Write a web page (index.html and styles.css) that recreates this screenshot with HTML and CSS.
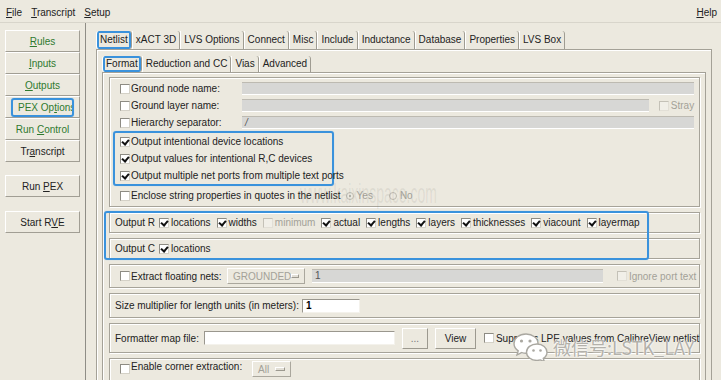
FILE: index.html
```html
<!DOCTYPE html>
<html lang="en">
<head>
    <meta charset="UTF-8">
    <title>Calibre Interactive - PEX</title>
    <link rel="stylesheet" href="styles.css">
</head>
<body>
    <div class="menubar">
        <span><u>F</u>ile</span>
        <span><u>T</u>ranscript</span>
        <span><u>S</u>etup</span>
        <span class="help"><u>H</u>elp</span>
    </div>

    <div class="main">
        <div class="sidebar">
            <div class="btn green"><span><u>R</u>ules</span></div>
            <div class="btn green"><span><u>I</u>nputs</span></div>
            <div class="btn green"><span><u>O</u>utputs</span></div>
            <div class="btn green"><span class="mark">PEX Op<u>t</u>ions</span></div>
            <div class="btn green"><span>Run <u>C</u>ontrol</span></div>
            <div class="btn"><span>Tr<u>a</u>nscript</span></div>
            <div class="btn gap"><span>Run <u>P</u>EX</span></div>
            <div class="btn gap2"><span>Start R<u>V</u>E</span></div>
        </div>

        <div class="content">
            <div class="tabs">
                <div class="tab sel">Netlist</div>
                <div class="tab">xACT 3D</div>
                <div class="tab">LVS Options</div>
                <div class="tab">Connect</div>
                <div class="tab">Misc</div>
                <div class="tab">Include</div>
                <div class="tab">Inductance</div>
                <div class="tab">Database</div>
                <div class="tab">Properties</div>
                <div class="tab">LVS Box</div>
            </div>
            <div class="pane">
                <div class="tabs sub">
                    <div class="tab sel">Format</div>
                    <div class="tab">Reduction and CC</div>
                    <div class="tab">Vias</div>
                    <div class="tab">Advanced</div>
                </div>
                <div class="pane inner">

                    <div class="group format">
                        <div class="row">
                            <span class="cb"></span><span class="lbl name">Ground node name:</span>
                            <span class="field"></span>
                        </div>
                        <div class="row">
                            <span class="cb"></span><span class="lbl name">Ground layer name:</span>
                            <span class="field"></span>
                            <span class="cb off stray"></span><span class="dim">Stray</span>
                        </div>
                        <div class="row">
                            <span class="cb"></span><span class="lbl name">Hierarchy separator:</span>
                            <span class="field slash">/</span>
                        </div>
                        <div class="picked">
                            <div class="row"><span class="cb on"></span>Output intentional device locations</div>
                            <div class="row"><span class="cb on"></span>Output values for intentional R,C devices</div>
                            <div class="row"><span class="cb on"></span>Output multiple net ports from multiple text ports</div>
                        </div>
                        <div class="row last">
                            <span class="cb"></span>Enclose string properties in quotes in the netlist
                            <span class="rb on"></span><span class="dim">Yes</span>
                            <span class="rb no"></span><span class="dim">No</span>
                        </div>
                    </div>

                    <div class="group line">
                        <span class="head">Output R</span>
                        <span class="item"><span class="cb on"></span>locations</span>
                        <span class="item"><span class="cb on"></span>widths</span>
                        <span class="item dim"><span class="cb off"></span>minimum</span>
                        <span class="item"><span class="cb on"></span>actual</span>
                        <span class="item"><span class="cb on"></span>lengths</span>
                        <span class="item"><span class="cb on"></span>layers</span>
                        <span class="item"><span class="cb on"></span>thicknesses</span>
                        <span class="item"><span class="cb on"></span>viacount</span>
                        <span class="item"><span class="cb on"></span>layermap</span>
                    </div>

                    <div class="group line">
                        <span class="head">Output C</span>
                        <span class="item"><span class="cb on"></span>locations</span>
                    </div>

                    <div class="group float">
                        <span class="cb"></span><span class="lbl nets">Extract floating nets:</span>
                        <span class="opt wide">GROUNDED<i></i></span>
                        <span class="field grow">1</span>
                        <span class="cb off ignore"></span><span class="dim">Ignore port text</span>
                    </div>

                    <div class="group size">
                        <span class="lbl mult">Size multiplier for length units (in meters):</span>
                        <span class="field white short">1</span>
                    </div>

                    <div class="group map">
                        <span class="lbl">Formatter map file:</span>
                        <span class="field white path"></span>
                        <span class="pbtn dots">...</span>
                        <span class="pbtn view">View</span>
                        <span class="cb supp"></span>Suppress LPE values from CalibreView netlist
                    </div>

                    <div class="group corner">
                        <span class="cb"></span><span class="lbl crn">Enable corner extraction:</span>
                        <span class="opt small">All<i></i></span>
                    </div>

                </div>
            </div>
        </div>
    </div>

    <!-- annotation box drawn over the Output R / Output C rows -->
    <div class="hl"></div>

    <div class="wm">www.kaixinspace.com</div>
    <div class="wechat">
        <svg width="38" height="29" viewBox="0 0 38 29">
            <path d="M14 2C7 2 2 6.3 2 11.5c0 3 1.6 5.6 4.2 7.3L5 23l4.6-2.4c1.4.4 2.8.6 4.4.6 6.6 0 12-4.3 12-9.7S20.6 2 14 2z" fill="#fff" stroke="#aaa8a1" stroke-width="1.4"/>
            <circle cx="9.5" cy="9" r="1.6" fill="#aaa8a1"/>
            <circle cx="18" cy="9" r="1.6" fill="#aaa8a1"/>
            <path d="M25 12c-6 0-10.5 3.7-10.5 8.2S19 28.4 25 28.4c1.2 0 2.4-.2 3.5-.5l3.8 1.8-1-3.3c2.3-1.5 3.7-3.7 3.7-6.2C35 15.7 30.8 12 25 12z" fill="#fff" stroke="#aaa8a1" stroke-width="1.4"/>
            <circle cx="21.5" cy="18.5" r="1.3" fill="#aaa8a1"/>
            <circle cx="28.5" cy="18.5" r="1.3" fill="#aaa8a1"/>
        </svg>
        <span>微信号:LSTK_LAY</span>
    </div>
</body>
</html>
```

FILE: styles.css
```css
*{
    box-sizing: border-box;
}

body{
    margin: 0;
    width: 721px;
    height: 380px;
    overflow: hidden;
    position: relative;
    background-color: #ECE9DF;
    font-family: "Liberation Sans", Arial, sans-serif;
    font-size: 10px;
    color: #222;
    white-space: nowrap;
}

u{
    text-decoration-thickness: 1px;
    text-underline-offset: 1px;
}

/* menu bar */
.menubar{
    height: 23px;
    display: flex;
    align-items: center;
    gap: 9px;
    padding: 2px 4px 0 6px;
    border-bottom: 1px solid #d8d5cb;
}

.menubar .help{
    margin-left: auto;
}

.main{
    display: flex;
    height: 357px;
}

/* left button column */
.sidebar{
    width: 86px;
    flex: none;
    padding: 7px 0 0 5px;
    border-right: 1px solid #8f8d86;
}

.btn{
    width: 75px;
    height: 22px;
    display: flex;
    align-items: center;
    justify-content: center;
    border: 1px solid;
    border-color: #fff #a19e94 #a19e94 #fff;
}

.btn.green{
    color: #2f7a2f;
}

.btn.gap{
    margin-top: 13px;
}

.btn.gap2{
    margin-top: 14px;
}

.mark{
    padding: 2px 2px 2px 5px;
    border: 2px solid #3a92dc;
    border-radius: 3px;
    box-shadow: 0 0 1px #8cc4f0;
    width: 63px;
    overflow: hidden;
}

/* tabs */
.content{
    flex: 1;
    padding: 8px 10px 0 10px;
    display: flex;
    flex-direction: column;
}

.tabs{
    display: flex;
    height: 18px;
    flex: none;
}

.tab{
    padding: 0 3px;
    line-height: 17px;
    border-left: 1px solid #fff;
    border-right: 1px solid #9f9c92;
    border-top-right-radius: 3px;
}

.tab.sel{
    border-radius: 3px;
    box-shadow: inset 0 0 0 2px #3a92dc;
}

.pane{
    flex: 1;
    border: 1px solid #a4a197;
    box-shadow: inset 1px 1px 0 #fff;
    padding: 6px 5px 0 5px;
    display: flex;
    flex-direction: column;
}

.sub{
    height: 16px;
}

.sub .tab{
    line-height: 15px;
}

.pane.inner{
    padding: 4px 5px 0 6px;
    gap: 5px;
}

/* group boxes */
.group{
    flex: none;
    display: flex;
    align-items: center;
    border: 1px solid #a6a399;
    box-shadow: inset 1px 1px 0 #fff, 1px 1px 0 #fff;
}

.group.format{
    display: block;
    height: 130px;
    padding: 2px 0 1px 0;
}

.row{
    display: flex;
    align-items: center;
    height: 17px;
    padding: 0 5px 0 10px;
}

.row.last{
    height: 19px;
}

.picked{
    width: 221px;
    margin-left: 3px;
    border: 2px solid #3a92dc;
    border-radius: 3px;
    box-shadow: 0 0 1px #8cc4f0;
}

.picked .row{
    padding-left: 5px;
}

.lbl.name{
    width: 111px;
}

.lbl.nets{
    width: 96px;
}

.lbl.mult{
    width: 187px;
}

.lbl.crn{
    width: 121px;
}

.dim{
    color: #a3a198;
}

/* checkboxes and radios */
.cb{
    width: 10px;
    height: 10px;
    flex: none;
    position: relative;
    margin-right: 1px;
    background-color: #fff;
    border: 1px solid;
    border-color: #8d8b83 #d4d1c7 #d4d1c7 #8d8b83;
}

.cb.on::after{
    content: "";
    position: absolute;
    left: 2px;
    top: 0;
    width: 3px;
    height: 5px;
    border: solid #111;
    border-width: 0 2px 2px 0;
    transform: rotate(40deg);
}

.cb.off{
    background-color: #f1efe8;
    border-color: #c4c1b7 #e2dfd6 #e2dfd6 #c4c1b7;
}

.cb.stray{
    margin-left: 10px;
    margin-right: 2px;
}

.cb.ignore{
    margin-left: 14px;
    margin-right: 2px;
}

.rb{
    width: 8px;
    height: 8px;
    flex: none;
    position: relative;
    border-radius: 50%;
    border: 1px solid #bdbab0;
    margin: 0 3px 0 5px;
}

.rb.on::after{
    content: "";
    position: absolute;
    left: 2px;
    top: 2px;
    width: 2px;
    height: 2px;
    border-radius: 50%;
    background-color: #a3a198;
}

.rb.no{
    margin-left: 16px;
}

/* text fields */
.field{
    flex: 1;
    height: 13px;
    line-height: 11px;
    padding-left: 3px;
    background-color: #d7d7d5;
    border-top: 1px solid #bdbab1;
    border-bottom: 1px solid #fff;
    color: #555;
}

.field.slash{
    font-style: italic;
}

.field.grow{
    height: 14px;
    margin-left: 7px;
}

.field.white{
    flex: none;
    height: 14px;
    background-color: #fff;
    border: 1px solid;
    border-color: #9a978e #f4f2ec #f4f2ec #9a978e;
    color: #000;
    font-weight: bold;
}

.field.short{
    width: 58px;
}

.field.path{
    width: 191px;
    margin-left: 5px;
}

/* option menus and push buttons */
.opt{
    height: 16px;
    display: flex;
    align-items: center;
    justify-content: space-between;
    padding: 0 5px;
    color: #a3a198;
    border: 1px solid;
    border-color: #fff #aaa79d #aaa79d #fff;
}

.opt i{
    width: 10px;
    height: 4px;
    border: 1px solid;
    border-color: #fff #9c998f #9c998f #fff;
    background-color: #e2dfd6;
}

.opt.wide{
    width: 78px;
}

.opt.small{
    width: 39px;
}

.group.line{
    height: 21px;
    padding-left: 5px;
}

.head{
    margin-right: 4px;
}

.item{
    display: flex;
    align-items: center;
    margin-right: 6px;
}

.item .cb{
    margin-right: 2px;
}

.group.float{
    height: 24px;
    padding: 0 3px 0 10px;
}

.group.size{
    height: 25px;
    padding-left: 5px;
}

.group.map{
    height: 30px;
    padding-left: 5px;
}

.pbtn{
    height: 21px;
    display: flex;
    align-items: center;
    justify-content: center;
    margin-left: 7px;
    border: 1px solid;
    border-color: #fff #9c998f #9c998f #fff;
}

.pbtn.dots{
    width: 26px;
    color: #777;
}

.pbtn.view{
    width: 41px;
}

.cb.supp{
    margin-left: 8px;
    margin-right: 2px;
}

.group.corner{
    height: 30px;
    align-items: flex-start;
    padding: 2px 0 0 10px;
}

.group.corner .cb{
    margin-top: 3px;
}

/* overlays */
.hl{
    position: absolute;
    left: 104px;
    top: 211px;
    width: 545px;
    height: 49px;
    border: 2px solid #3a92dc;
    border-radius: 3px;
    box-shadow: 0 0 1px #8cc4f0;
}

.wm{
    position: absolute;
    left: 300px;
    top: 180px;
    font-size: 28px;
    line-height: 28px;
    color: rgba(120, 118, 110, 0.13);
    transform: scaleX(0.5);
    transform-origin: left;
}

.wechat{
    position: absolute;
    left: 512px;
    top: 332px;
    display: flex;
    align-items: center;
    gap: 3px;
}

.wechat span{
    font-family: "Noto Sans CJK SC", sans-serif;
    font-size: 18px;
    line-height: 20px;
    color: #b3b1aa;
    text-shadow: 0 0 2px #fff, 0 0 2px #fff;
}
```
